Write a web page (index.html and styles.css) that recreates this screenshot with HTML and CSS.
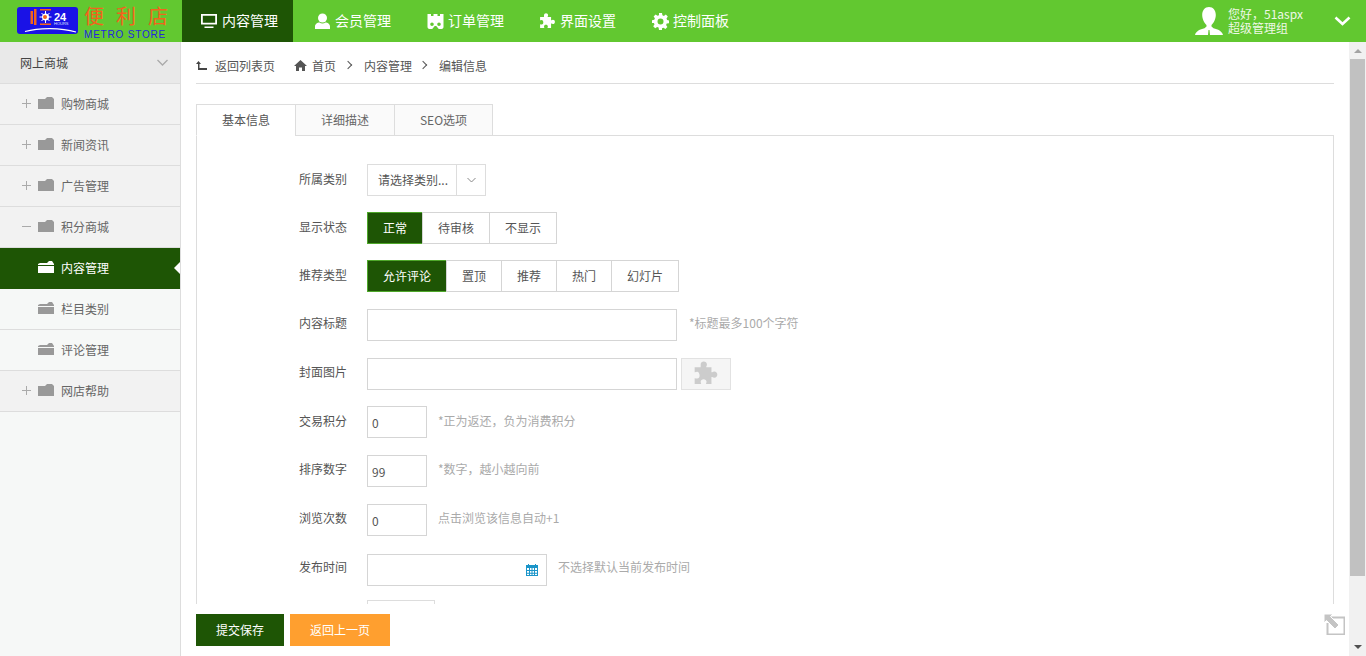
FILE: index.html
```html
<!DOCTYPE html>
<html>
<head>
<meta charset="utf-8">
<title>内容管理</title>
<link rel="stylesheet" href="styles.css">
</head>
<body>
<svg width="0" height="0" class="defs">
  <symbol id="puzzle" viewBox="2 0.500 18 19.500"><path d="M7 3.200C7 1.600 8 .8 9.300 .8s2.400.9 2.400 2.300c0 .7-.3 1.100-.5 1.500v.6h3.900v3.700h.6c.4-.3.900-.6 1.500-.6 1.400 0 2.300 1.100 2.300 2.400s-.9 2.400-2.300 2.400c-.6 0-1.100-.3-1.500-.6h-.6v5.300h-4c-.2-.6.300-1 .3-1.800 0-1.200-1-1.900-2.200-1.900s-2.200.7-2.200 1.900c0 .8.500 1.200.3 1.800H2.500v-4.400c.6-.1 1 .3 1.800.3 1.200 0 1.900-1 1.900-2.300S5.500 8.600 4.300 8.600c-.8 0-1.200.5-1.800.3V5.200h4.400c.2-.4.100-1.300.1-2z"/></symbol>
  <symbol id="folder" viewBox="0 0 16 12"><path d="M0 2h7l1-1 1-1h5l2 2v10H0z"/></symbol>
  <symbol id="folder-open" viewBox="0 0 16 12"><path d="M0 3l2-1h7l2-2h3l2 3v1H0zM0 5h16v7H0z"/></symbol>
</svg>

<div class="topbar">
  <div class="logo">
    <div class="logo-badge">
      <svg width="61" height="27" viewBox="0 0 61 27">
        <path d="M13.500 4h2.500v13h-2.500zM17 2h2.500v16H17zM23 2h11v1.500H23zM23 16.500h11V18H23z" fill="#f2631c"/>
        <path d="M28.500 4v12M22.500 10h12M24.500 6l8 8M32.500 6l-8 8" stroke="#fff"/>
        <circle cx="28.500" cy="10" r="3.500" fill="#fff"/><circle cx="28" cy="10" r="2" fill="#f2631c"/>
        <path d="M8 24.500c14-4 36-4 51 .5" fill="none" stroke="#fff" stroke-width="1.200"/>
      </svg>
      <span class="logo-24">24</span>
      <span class="logo-hours">HOURS</span>
    </div>
    <div class="logo-name">
      <div class="logo-cn">便利店</div>
      <div class="logo-en">METRO STORE</div>
    </div>
  </div>
  <ul class="topnav">
    <li class="on">
      <svg width="16" height="16" viewBox="0 0 16 16" fill="#fff"><path d="M0 1h16v10.500H0zM1.800 2.800v7h12.400v-7zM3.500 13.500h9V15h-9z" fill-rule="evenodd"/></svg>
      内容管理
    </li>
    <li>
      <svg width="16" height="16" viewBox="0 0 16 16" fill="#fff"><circle cx="8" cy="5" r="4.500"/><path d="M.500 16v-2.500C.500 11 3 9.500 5 9.500c1.800 1.200 4.200 1.200 6 0 2 0 4.500 1.500 4.500 4V16z"/></svg>
      会员管理
    </li>
    <li>
      <svg width="16" height="16" viewBox="0 0 16 16" fill="#fff"><path fill-rule="evenodd" d="M0 1h3.500v2H6V1h4v2h2.500V1H16v13c0 1-1 2-2 2h-2c-1 0-1.500-.6-2-1.500-.4-.8-1-1.500-2-1.500s-1.600.7-2 1.500C5.500 15.400 5 16 4 16H2c-1 0-2-1-2-2zM4.500 9.500a1.800 1.800 0 1 0 0 3.600 1.800 1.800 0 0 0 0-3.600zM11.500 9.500a1.800 1.800 0 1 0 0 3.600 1.800 1.800 0 0 0 0-3.600z"/></svg>
      订单管理
    </li>
    <li>
      <svg width="17" height="17"><use href="#puzzle" fill="#fff"/></svg>
      界面设置
    </li>
    <li>
      <svg width="17" height="17" viewBox="0 0 17 17" fill="#fff"><path fill-rule="evenodd" d="M7 0h3l.4 2.300 1.500.6L13.800 1.600l2 2-1.300 1.900.6 1.500L17 7.400v2.800l-2.300.4-.6 1.500 1.300 1.900-2 2-1.900-1.300-1.500.6L10 17H7l-.4-2.400-1.500-.6-1.900 1.300-2-2 1.300-1.900-.6-1.500L0 10V7.200l2.300-.4.600-1.500L1.600 3.500l2-2 1.900 1.300 1.500-.6zM8.500 5.500a3 3 0 1 0 0 6 3 3 0 0 0 0-6z"/></svg>
      控制面板
    </li>
  </ul>
  <div class="userbox">
    <svg width="28" height="28" viewBox="0 0 28 28" fill="#fff"><path d="M14 0c4.200 0 6.800 3.500 6.800 8 0 4-2.300 8.500-4.300 10v1.500l2 1.800C23 22.500 27 24 28 28H15l-.5-5h-1l-.5 5H0c1-4 5-5.500 9.500-6.700l2-1.800V18C9.500 16.500 7.200 12 7.200 8 7.200 3.500 9.800 0 14 0z"/></svg>
    <div class="usertext">
      <div>您好，51aspx</div>
      <div>超级管理组</div>
    </div>
    <svg class="userarrow" width="17" height="10" viewBox="0 0 17 10"><path d="M1.500 1.500l7 6.500 7-6.500" fill="none" stroke="#fff" stroke-width="2.600"/></svg>
  </div>
</div>

<div class="layout">
  <div class="sidebar">
    <div class="side-head">
      <span>网上商城</span>
      <svg width="11" height="7" viewBox="0 0 11 7"><path d="M.500 1l5 5 5-5" fill="none" stroke="#aaa" stroke-width="1.300"/></svg>
    </div>
    <div class="side-row"><span class="tog plus"></span><svg class="fold" width="16" height="12"><use href="#folder"/></svg>购物商城</div>
    <div class="side-row"><span class="tog plus"></span><svg class="fold" width="16" height="12"><use href="#folder"/></svg>新闻资讯</div>
    <div class="side-row"><span class="tog plus"></span><svg class="fold" width="16" height="12"><use href="#folder"/></svg>广告管理</div>
    <div class="side-row"><span class="tog"></span><svg class="fold" width="16" height="12"><use href="#folder"/></svg>积分商城</div>
    <div class="side-row sub active"><span class="tog none"></span><svg class="fold" width="16" height="12"><use href="#folder-open"/></svg>内容管理</div>
    <div class="side-row sub"><span class="tog none"></span><svg class="fold" width="16" height="12"><use href="#folder-open"/></svg>栏目类别</div>
    <div class="side-row sub"><span class="tog none"></span><svg class="fold" width="16" height="12"><use href="#folder-open"/></svg>评论管理</div>
    <div class="side-row"><span class="tog plus"></span><svg class="fold" width="16" height="12"><use href="#folder"/></svg>网店帮助</div>
  </div>

  <div class="main">
    <div class="content">
      <div class="crumbs">
        <svg width="11" height="9" viewBox="0 0 11 9" fill="#444"><path d="M0 3l2.500-3L5 3H3.500v4H11v2H2V3z"/></svg>
        <span class="back">返回列表页</span>
        <svg width="13" height="11" viewBox="0 0 13 11" fill="#555"><path d="M6.500 0L13 6h-2v5H8V7.500H5V11H2V6H0z"/></svg>
        <span class="c1">首页</span>
        <i class="sep first"></i>
        <span>内容管理</span>
        <i class="sep"></i>
        <span>编辑信息</span>
      </div>

      <div class="tabs">
        <a class="tab on">基本信息</a>
        <a class="tab">详细描述</a>
        <a class="tab seo">SEO选项</a>
      </div>

      <div class="tabbody">
        <div class="row r1">
          <label>所属类别</label>
          <div class="select">
            <span class="sel-text">请选择类别...</span>
            <span class="sel-btn"><svg width="9" height="6" viewBox="0 0 9 6"><path d="M.500 1l4 4 4-4" fill="none" stroke="#888"/></svg></span>
          </div>
        </div>
        <div class="row r2">
          <label>显示状态</label>
          <div class="btngroup">
            <a class="on w56">正常</a><a class="w67">待审核</a><a class="w67">不显示</a>
          </div>
        </div>
        <div class="row r3">
          <label>推荐类型</label>
          <div class="btngroup">
            <a class="on w80">允许评论</a><a class="w55">置顶</a><a class="w55">推荐</a><a class="w55">热门</a><a class="w67">幻灯片</a>
          </div>
        </div>
        <div class="row r4">
          <label>内容标题</label>
          <input class="ipt wide" type="text">
          <span class="tip">*标题最多100个字符</span>
        </div>
        <div class="row r5">
          <label>封面图片</label>
          <input class="ipt wide" type="text">
          <span class="upload"><svg width="24" height="26"><use href="#puzzle" fill="#ccc"/></svg></span>
        </div>
        <div class="row r6">
          <label>交易积分</label>
          <input class="ipt small" type="text" value="0">
          <span class="tip t11">*正为返还，负为消费积分</span>
        </div>
        <div class="row r7">
          <label>排序数字</label>
          <input class="ipt small" type="text" value="99">
          <span class="tip t11">*数字，越小越向前</span>
        </div>
        <div class="row r8">
          <label>浏览次数</label>
          <input class="ipt small" type="text" value="0">
          <span class="tip t11">点击浏览该信息自动+1</span>
        </div>
        <div class="row r9">
          <label>发布时间</label>
          <div class="datebox">
            <svg width="12" height="12" viewBox="0 0 12 12"><path fill="#1b95c9" fill-rule="evenodd" d="M0 1h2V0h1v1h6V0h1v1h2v11H0zM1 4v2h2V4zM4 4v2h1.500V4zM6.500 4v2H8V4zM9 4v2h2V4zM1 7v1.700h2V7zM4 7v1.700h1.500V7zM6.500 7v1.700H8V7zM9 7v1.700h2V7zM1 9.700V11h2V9.700zM4 9.700V11h1.500V9.700zM6.500 9.700V11H8V9.700zM9 9.700V11h2V9.700z"/></svg>
          </div>
          <span class="tip t11">不选择默认当前发布时间</span>
        </div>
        <div class="row r10">
          <label></label>
          <input class="ipt last" type="text">
        </div>
      </div>
    </div>

    <div class="footbar">
      <a class="btn save">提交保存</a>
      <a class="btn goback">返回上一页</a>
    </div>

    <svg class="fullscreen" width="21" height="21" viewBox="0 0 21 21">
      <path d="M5.500 3.500h15v17h-17V9" fill="none" stroke="#c4c4c4" stroke-width="2"/>
      <path d="M0 0h9L6.500 2.500 15 11l-4 4-8.500-8.500L0 9z" fill="#c4c4c4" stroke="#fff"/>
    </svg>
  </div>

  <div class="scrollbar">
    <i class="arrow up"></i>
    <div class="thumb"></div>
    <i class="arrow down"></i>
  </div>
</div>
</body>
</html>
```

FILE: styles.css
```css
* {
    box-sizing: border-box;
}

html, body {
    height: 100%;
    margin: 0;
    overflow: hidden;
}

body {
    font-family: "Noto Sans CJK SC", "Liberation Sans", sans-serif;
    font-size: 12px;
    color: #555;
    background: #fff;
}

a {
    text-decoration: none;
    display: block;
}

.defs {
    display: block;
    height: 0;
}

/* top bar */
.topbar {
    height: 42px;
    background: #62c830;
    display: flex;
    color: #fff;
}

.logo {
    width: 182px;
    display: flex;
    padding: 7px 0 0 17px;
}

.logo-badge {
    width: 61px;
    height: 27px;
    background: #1a12e6;
    border-radius: 3px;
    position: relative;
}

.logo-badge svg {
    display: block;
}

.logo-24 {
    position: absolute;
    left: 37px;
    top: 4px;
    font: bold 11px/12px "Liberation Sans", sans-serif;
    color: #fff;
}

.logo-hours {
    position: absolute;
    left: 37px;
    top: 15px;
    font: 4px/4px "Liberation Sans", sans-serif;
    color: #dfe4ff;
}

.logo-name {
    margin-left: 6px;
    width: 83px;
}

.logo-cn {
    color: #f2631c;
    font-size: 20px;
    line-height: 22px;
    letter-spacing: 12px;
    margin-top: -2px;
    white-space: nowrap;
}

.logo-en {
    color: #2225e0;
    font: 10px/11px "Liberation Sans", sans-serif;
    letter-spacing: 0.800px;
    margin-top: 2px;
    white-space: nowrap;
}

.topnav {
    list-style: none;
    margin: 0;
    padding: 0;
    display: flex;
}

.topnav li {
    height: 42px;
    width: 113px;
    padding: 0 0 2px 21px;
    display: flex;
    align-items: center;
    gap: 4px;
    font-size: 14px;
    white-space: nowrap;
}

.topnav li svg {
    margin-top: 2px;
    width: 17px;
}

.topnav li:nth-child(3) {
    width: 112px;
}

.topnav li.on {
    background: #1e5505;
    width: 111px;
    padding-left: 19px;
    gap: 5px;
}

.topnav li.on svg {
    width: 16px;
}

.userbox {
    margin-left: auto;
    display: flex;
    align-items: center;
    padding-right: 15px;
}

.usertext {
    margin-left: 5px;
    width: 106px;
    font-size: 12px;
    line-height: 14px;
    color: #eef8e6;
}

/* side menu */
.layout {
    display: flex;
    height: 614px;
}

.sidebar {
    width: 181px;
    flex: none;
    background: #f6f8f7;
    border-right: 1px solid #ddd;
}

.side-head {
    height: 42px;
    background: #e9e9e9;
    border-bottom: 1px solid #ddd;
    padding: 0 12px 0 20px;
    display: flex;
    align-items: center;
    justify-content: space-between;
    color: #444;
}

.side-row {
    height: 41px;
    background: #f2f2f2;
    border-bottom: 1px solid #ddd;
    display: flex;
    align-items: center;
    padding: 0 0 2px 22px;
    color: #666;
    position: relative;
}

.side-row.sub {
    background: #f6f8f7;
}

.side-row.active {
    background: #1e5505;
    color: #fff;
    border-bottom-color: #1e5505;
}

.side-row.active:after {
    content: "";
    position: absolute;
    right: 0;
    top: 14px;
    border: 6px solid transparent;
    border-right-color: #fff;
    border-left-width: 0;
}

.tog {
    width: 9px;
    height: 9px;
    margin-right: 7px;
    background: linear-gradient(#aaa, #aaa) center / 9px 1px no-repeat;
}

.tog.plus {
    background: linear-gradient(#aaa, #aaa) center / 9px 1px no-repeat,
                linear-gradient(#aaa, #aaa) center / 1px 9px no-repeat;
}

.tog.none {
    background: none;
}

.fold {
    fill: #999;
    margin-right: 7px;
}

.active .fold {
    fill: #fff;
}

/* main area */
.main {
    flex: 1;
    min-width: 0;
    display: flex;
    flex-direction: column;
    position: relative;
}

.content {
    flex: 1;
    min-height: 0;
    overflow: hidden;
    padding: 0 15px;
}

.crumbs {
    height: 42px;
    border-bottom: 1px solid #ddd;
    display: flex;
    align-items: center;
    color: #555;
    padding-top: 5px;
}

.crumbs svg {
    flex: none;
}

.back {
    margin: 0 19px 0 8px;
}

.c1 {
    margin-left: 5px;
}

.sep {
    width: 6px;
    height: 6px;
    border-top: 1px solid #555;
    border-right: 1px solid #555;
    transform: rotate(45deg);
    margin: 0 13px 0 8px;
}

.sep.first {
    margin-left: 9px;
}

.tabs {
    display: flex;
    margin-top: 20px;
    position: relative;
    z-index: 1;
}

.tab {
    width: 100px;
    height: 32px;
    line-height: 30px;
    text-align: center;
    color: #666;
    background: #fafafa;
    border: 1px solid #ddd;
    margin-left: -1px;
}

.tab:first-child {
    margin-left: 0;
}

.tab.seo {
    width: 99px;
}

.tab.on {
    background: #fff;
    border-bottom-color: #fff;
    color: #555;
}

.tabbody {
    border: 1px solid #ddd;
    margin-top: -1px;
    padding-top: 28px;
    height: 600px;
}

.row {
    display: flex;
    align-items: center;
    height: 32px;
    margin-bottom: 16px;
}

.r3 { margin-bottom: 17px; }
.r4 { margin-bottom: 17px; }
.r6 { margin-bottom: 17px; }
.r7 { margin-bottom: 17px; }
.r8 { margin-bottom: 18px; }
.r9 { margin-bottom: 14px; }

.row label, .tip {
    padding-bottom: 4px;
}

.r4 label, .r4 .tip,
.r5 label,
.r7 label, .r7 .tip,
.r8 label, .r8 .tip {
    padding-bottom: 6px;
}

.r9 label, .r9 .tip {
    padding-bottom: 8px;
}

.row label {
    width: 150px;
    text-align: right;
    margin-right: 20px;
    color: #555;
    flex: none;
}

.select {
    width: 119px;
    height: 32px;
    border: 1px solid #ddd;
    display: flex;
}

.sel-text {
    flex: 1;
    line-height: 29px;
    padding-left: 10px;
    white-space: nowrap;
}

.sel-btn {
    width: 29px;
    border-left: 1px solid #ddd;
    display: flex;
    align-items: center;
    justify-content: center;
}

.btngroup {
    display: flex;
}

.btngroup a {
    height: 32px;
    line-height: 30px;
    text-align: center;
    color: #555;
    border: 1px solid #d5d5d5;
    margin-left: -1px;
}

.btngroup a:first-child {
    margin-left: 0;
}

.btngroup a.on {
    background: #1e5505;
    color: #fff;
    border-color: #4ea82a;
}

.w56 { width: 56px; }
.w67 { width: 68px; }
.w80 { width: 80px; }
.w55 { width: 56px; }

.ipt {
    height: 32px;
    border: 1px solid #d5d5d5;
    padding: 0 4px;
    font: 12px "Noto Sans CJK SC", "Liberation Sans", sans-serif;
    color: #555;
    background: #fff;
    outline: none;
}

.wide { width: 310px; }
.small { width: 60px; }
.last { width: 68px; border-color: #ddd; }

.tip {
    color: #aaa;
    margin-left: 12px;
}

.t11 {
    margin-left: 11px;
}

.upload {
    width: 50px;
    height: 32px;
    margin-left: 4px;
    background: #f5f5f5;
    border: 1px solid #e2e2e2;
    display: flex;
    align-items: center;
    justify-content: center;
}

.datebox {
    width: 180px;
    height: 32px;
    border: 1px solid #d5d5d5;
    display: flex;
    align-items: center;
    justify-content: flex-end;
    padding-right: 8px;
}

/* fixed buttons */
.footbar {
    height: 52px;
    flex: none;
    padding: 10px 15px 0;
    display: flex;
    gap: 6px;
    background: #fff;
}

.btn {
    height: 32px;
    line-height: 32px;
    text-align: center;
    color: #fff;
}

.save {
    width: 88px;
    background: #1e5505;
}

.goback {
    width: 100px;
    background: #ff9f2f;
}

.fullscreen {
    position: absolute;
    right: 4px;
    bottom: 21px;
}

/* page scrollbar */
.scrollbar {
    width: 17px;
    flex: none;
    background: #f1f1f1;
    display: flex;
    flex-direction: column;
    align-items: center;
}

.thumb {
    width: 15px;
    height: 517px;
    background: #c1c1c1;
    margin-top: 6px;
}

.arrow {
    width: 0;
    height: 0;
    border: 4px solid transparent;
}

.arrow.up {
    border-bottom: 4px solid #a3a3a3;
    border-top-width: 0;
    margin-top: 7px;
}

.arrow.down {
    border-top: 4px solid #505050;
    border-bottom-width: 0;
    margin-top: auto;
    margin-bottom: 7px;
}
```
